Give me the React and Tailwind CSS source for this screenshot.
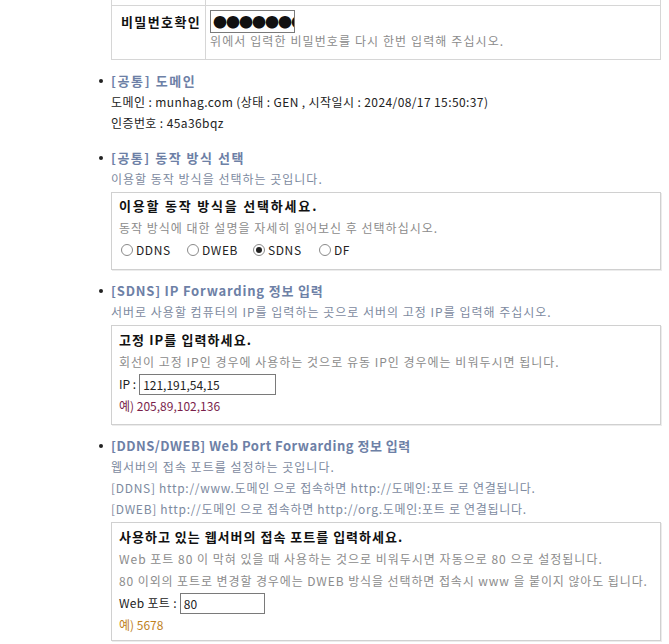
import React from "react";

const font = { fontFamily: '"Noto Sans CJK KR", "Noto Sans", sans-serif' };

function Radio({ checked, label, last }) {
  return (
    <span className={"inline-flex items-center " + (last ? "" : "w-[66px]")}>
      <span className="w-[12px] h-[12px] rounded-full border border-[#8a8a8a] bg-white flex items-center justify-center mr-[3px]">
        {checked && <span className="w-[6px] h-[6px] rounded-full bg-[#222]" />}
      </span>
      <span className="text-[#222] tracking-[0.6px]">{label}</span>
    </span>
  );
}

function Title({ children, className = "tracking-[0.8px]" }) {
  return (
    <div className={"relative h-[21px] leading-[21px] text-[13px] font-bold text-[#6d80a6] whitespace-nowrap " + className}>
      <span className="absolute left-[-12px] top-[9px] w-[4px] h-[4px] rounded-full bg-[#222]" />
      {children}
    </div>
  );
}

function Line({ children, className = "" }) {
  return <div className={"h-[21px] leading-[21px] text-[12px] whitespace-nowrap " + className}>{children}</div>;
}

export default function App() {
  return (
    <div className="w-[669px] h-[644px] bg-white overflow-hidden" style={font}>
      <div className="pl-[111px] pr-[8px]">
        {/* table remnant */}
        <div className="h-[5px] border-l border-r border-[#d6d6d6] flex">
          <div className="w-[94px] border-r border-[#d6d6d6]" />
        </div>
        <div className="flex border border-[#d6d6d6] h-[55px]">
          <div className="w-[94px] border-r border-[#d6d6d6] pl-[9px] pt-[5px] text-[13px] font-bold text-[#111] leading-[21px] tracking-[1.4px] whitespace-nowrap">
            비밀번호확인
          </div>
          <div className="pl-[4px] pt-[4px]">
            <div className="w-[85px] h-[23px] border border-[#7a7a7a] overflow-hidden whitespace-nowrap text-[14px] leading-[21px] text-[#111] pl-[2px] tracking-[-1px]">
              ●●●●●●●●●
            </div>
            <div className="text-[12px] leading-[16px] text-[#8c8c8c] tracking-[1.1px] whitespace-nowrap">
              위에서 입력한 비밀번호를 다시 한번 입력해 주십시오.
            </div>
          </div>
        </div>

        {/* section 1 */}
        <div className="mt-[10px]">
          <Title className="tracking-[1.6px]">[공통] 도메인</Title>
          <Line className="text-[#222] tracking-[0.4px]">도메인 : munhag.com (상태 : GEN , 시작일시 : 2024/08/17 15:50:37)</Line>
          <Line className="text-[#222] tracking-[0.4px]">인증번호 : 45a36bqz</Line>
        </div>

        {/* section 2 */}
        <div className="mt-[14px]">
          <Title className="tracking-[1.5px]">[공통] 동작 방식 선택</Title>
          <Line className="text-[#7d8aa0] tracking-[1px]">이용할 동작 방식을 선택하는 곳입니다.</Line>
          <div className="mt-[3px] border border-[#d0d0d0] shadow-[1px_1px_0_#ececec] h-[78px] px-[7px] pt-[2px]">
            <Line className="text-[13px] font-bold text-[#111] h-[22px] tracking-[1.8px]">이용할 동작 방식을 선택하세요.</Line>
            <Line className="text-[#8c8c8c] h-[22px] tracking-[1px]">동작 방식에 대한 설명을 자세히 읽어보신 후 선택하십시오.</Line>
            <div className="h-[22px] flex items-center text-[12px] pl-[2px]">
              <Radio label="DDNS" />
              <Radio label="DWEB" />
              <Radio label="SDNS" checked />
              <Radio label="DF" last />
            </div>
          </div>
        </div>

        {/* section 3 */}
        <div className="mt-[10px]">
          <Title className="tracking-[0.8px]">[SDNS] IP Forwarding 정보 입력</Title>
          <Line className="text-[#7d8aa0] tracking-[1px]">서버로 사용할 컴퓨터의 IP를 입력하는 곳으로 서버의 고정 IP를 입력해 주십시오.</Line>
          <div className="mt-[3px] border border-[#d0d0d0] shadow-[1px_1px_0_#ececec] h-[100px] px-[7px] pt-[3px]">
            <Line className="text-[13px] font-bold text-[#111] h-[22px] tracking-[1.1px]">고정 IP를 입력하세요.</Line>
            <Line className="text-[#8c8c8c] h-[22px] tracking-[1px]">회선이 고정 IP인 경우에 사용하는 것으로 유동 IP인 경우에는 비워두시면 됩니다.</Line>
            <div className="h-[22px] flex items-center text-[12px] text-[#222]">
              <span className="mr-[3px]">IP :</span>
              <div className="w-[137px] h-[21px] border border-[#7a7a7a] leading-[19px] pl-[3px]">121,191,54,15</div>
            </div>
            <Line className="text-[#7a1f4c]">예) 205,89,102,136</Line>
          </div>
        </div>

        {/* section 4 */}
        <div className="mt-[10px]">
          <Title className="tracking-[0.5px]">[DDNS/DWEB] Web Port Forwarding 정보 입력</Title>
          <Line className="text-[#7d8aa0] tracking-[1px]">웹서버의 접속 포트를 설정하는 곳입니다.</Line>
          <Line className="text-[#7d8aa0] tracking-[0.7px]">[DDNS] http://www.도메인 으로 접속하면 http://도메인:포트 로 연결됩니다.</Line>
          <Line className="text-[#7d8aa0] tracking-[0.7px]">[DWEB] http://도메인 으로 접속하면 http://org.도메인:포트 로 연결됩니다.</Line>
          <div className="mt-[3px] border border-[#d0d0d0] shadow-[1px_1px_0_#ececec] h-[119px] px-[7px] pt-[3px]">
            <Line className="text-[13px] font-bold text-[#111] h-[22px] tracking-[1px]">사용하고 있는 웹서버의 접속 포트를 입력하세요.</Line>
            <Line className="text-[#8c8c8c] h-[22px] tracking-[1px]">Web 포트 80 이 막혀 있을 때 사용하는 것으로 비워두시면 자동으로 80 으로 설정됩니다.</Line>
            <Line className="text-[#8c8c8c] h-[22px] tracking-[0.9px]">80 이외의 포트로 변경할 경우에는 DWEB 방식을 선택하면 접속시 www 을 붙이지 않아도 됩니다.</Line>
            <div className="h-[22px] flex items-center text-[12px] text-[#222]">
              <span className="mr-[3px] tracking-[0.3px]">Web 포트 :</span>
              <div className="w-[85px] h-[21px] border border-[#7a7a7a] leading-[19px] pl-[3px]">80</div>
            </div>
            <Line className="text-[#c0821e]">예) 5678</Line>
          </div>
        </div>
      </div>
    </div>
  );
}
